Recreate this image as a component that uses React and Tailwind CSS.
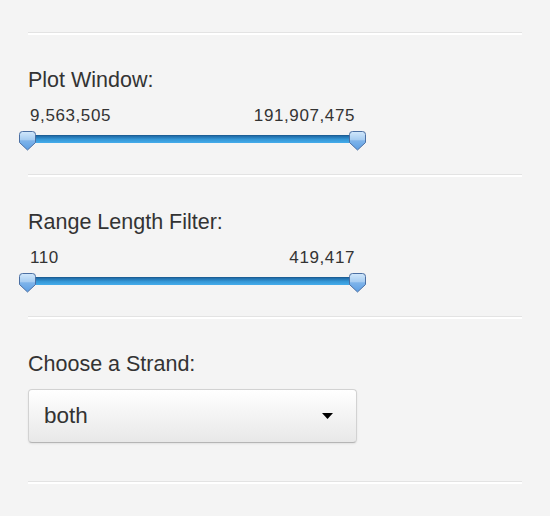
import React from "react";

function Hr() {
  return <div className="h-[3px] border-t border-[#e3e3e3] border-b-2 border-b-white" />;
}

function Thumb() {
  return (
    <svg width="17" height="20" viewBox="0 0 17 20" className="block">
      <defs>
        <linearGradient id="tg" x1="0" y1="0" x2="0" y2="1">
          <stop offset="0" stopColor="#d2e8fb" />
          <stop offset="0.45" stopColor="#a6ccf1" />
          <stop offset="0.5" stopColor="#7fb4ea" />
          <stop offset="1" stopColor="#5b9ee3" />
        </linearGradient>
      </defs>
      <path
        d="M3.5 0.5 H13.5 Q16.5 0.5 16.5 3.5 V11.5 L8.5 19 L0.5 11.5 V3.5 Q0.5 0.5 3.5 0.5 Z"
        fill="url(#tg)"
        stroke="#4b6fa3"
        strokeWidth="1"
      />
    </svg>
  );
}

function Slider({ label, min, max }) {
  return (
    <div>
      <div className="mt-[33px] h-[25px] leading-[25px] text-[21.5px] text-[#333]">{label}</div>
      <div className="mt-[13px] w-[331px] -ml-[1px] flex justify-between pl-[3px] pr-[3px] h-[20px] leading-[20px] text-[17px] tracking-[0.6px] text-[#333]">
        <span>{min}</span>
        <span>{max}</span>
      </div>
      <div className="mt-[5px] w-[331px] -ml-[1px] h-[20px] relative">
        <div className="absolute left-0 right-0 top-[4px] h-[8px] bg-gradient-to-b from-[#1f6ba8] via-[#3597d6] to-[#45aceb] border-t border-[#1c5f96]" />
        <div className="absolute -left-[8px] top-0">
          <Thumb />
        </div>
        <div className="absolute -right-[8px] top-0">
          <Thumb />
        </div>
      </div>
    </div>
  );
}

export default function App() {
  return (
    <div
      className="w-[550px] h-[516px] bg-[#f4f4f4] px-[28px] pt-[32px] overflow-hidden"
      style={{ fontFamily: '"Liberation Sans", Arial, sans-serif' }}
    >
      <Hr />
      <Slider label="Plot Window:" min="9,563,505" max="191,907,475" />
      <div className="mt-[23px]">
        <Hr />
      </div>
      <Slider label="Range Length Filter:" min="110" max="419,417" />
      <div className="mt-[23px]">
        <Hr />
      </div>
      <div className="mt-[33px] h-[25px] leading-[25px] text-[21.5px] text-[#333]">Choose a Strand:</div>
      <div className="mt-[12px] w-[329px] h-[54px] rounded-[4px] border border-[#d2d2d2] border-b-[#b5b5b5] bg-gradient-to-b from-white to-[#e8e8e8] shadow-[0_1px_2px_rgba(0,0,0,0.08)] flex items-center justify-between pl-[15px] pr-[23px]">
        <span className="text-[22.5px] text-[#333]">both</span>
        <svg width="11" height="6" viewBox="0 0 11 6">
          <path d="M0 0 H11 L5.5 6 Z" fill="#000" />
        </svg>
      </div>
      <div className="mt-[38px]">
        <Hr />
      </div>
    </div>
  );
}
